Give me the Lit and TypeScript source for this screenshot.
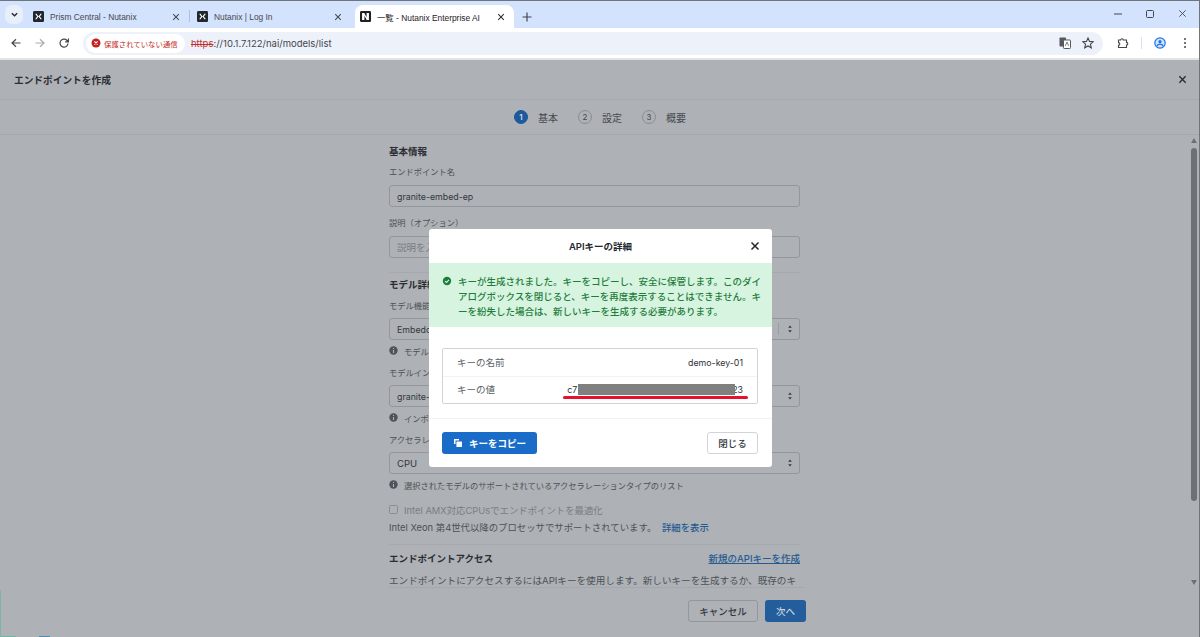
import { LitElement, html, css } from "lit";
import { customElement } from "lit/decorators.js";

const xIcon = (size: number, color: string, w = 1.6) => html`<svg width=${size} height=${size} viewBox="0 0 10 10"><path d="M1.5 1.5L8.5 8.5M8.5 1.5L1.5 8.5" stroke=${color} stroke-width=${w} fill="none"/></svg>`;
const nxLogo = html`<svg width="11" height="11" viewBox="0 0 16 16"><rect width="16" height="16" rx="2" fill="#22272e"/><path d="M4 4l3 4-3 4M12 4L9 8l3 4" stroke="#fff" stroke-width="1.8" fill="none"/></svg>`;
const nLogo = html`<svg width="11" height="11" viewBox="0 0 16 16"><rect width="16" height="16" rx="2" fill="#1c1f24"/><path d="M3 3h3.4v10H3zM9.6 3H13v10H9.6z" fill="#fff"/><path d="M5 3.5l6 9" stroke="#fff" stroke-width="2"/></svg>`;
const infoIcon = html`<svg class="info" width="9" height="9" viewBox="0 0 9 9"><circle cx="4.5" cy="4.5" r="4.2" fill="#4d545c"/><path d="M4.5 4V7M4.5 2V3.1" stroke="#aeb1b5" stroke-width="1.1"/></svg>`;
const selectArrows = html`<svg width="8" height="10" viewBox="0 0 8 10"><path d="M4 1.6L5.8 3.8H2.2zM4 8.4L5.8 6.2H2.2z" fill="#33383e"/></svg>`;

@customElement("app-root")
export class AppRoot extends LitElement {
  static styles = css`
    :host {
      display: block;
      width: 1200px;
      height: 637px;
      overflow: hidden;
      position: relative;
      font-family: "Inter", "Noto Sans CJK JP", sans-serif;
      background: #aeb1b5;
    }
    .tabstrip {
      height: 28px;
      background: #d3e3fd;
      display: flex;
      align-items: flex-end;
      padding-left: 5px;
      border-top: 1px solid #70757a;
      box-sizing: border-box;
      position: relative;
    }
    .tab-search {
      width: 18px;
      height: 19px;
      margin: 0 5px 4px 0;
      border-radius: 7px;
      background: #e8effb;
      display: flex;
      align-items: center;
      justify-content: center;
    }
    .tab {
      width: 161px;
      height: 23px;
      display: flex;
      align-items: center;
      padding: 0 9px 0 5px;
      gap: 6px;
      font-family: "Liberation Sans", "Noto Sans CJK JP", sans-serif;
      font-size: 8.4px;
      color: #45484d;
      flex: none;
      box-sizing: border-box;
    }
    .tab.second { padding-left: 7px; }
    .tab .label { flex: 1; white-space: nowrap; }
    .tab.active {
      width: 159px;
      margin-left: 4px;
      background: #fff;
      border-radius: 8px 8px 0 0;
      color: #1f2124;
    }
    .tab-sep { width: 1px; height: 12px; background: #a8c0e4; margin-bottom: 6px; }
    .plus { margin: 0 0 6px 8px; display: flex; align-items: center; }
    .win {
      position: absolute;
      right: 0;
      top: 8px;
      display: flex;
      gap: 24px;
      padding-right: 13px;
      align-items: center;
    }
    .toolbar {
      height: 30px;
      background: #fff;
      display: flex;
      align-items: center;
      padding-left: 10px;
    }
    .nav { display: flex; gap: 12px; align-items: center; margin-right: 13px; }
    .nav svg { display: block; }
    .omni {
      width: 1020px;
      height: 23px;
      border-radius: 12px;
      background: #ecf1fa;
      display: flex;
      align-items: center;
      padding-left: 3px;
      box-sizing: border-box;
      font-size: 9.5px;
      color: #44474c;
    }
    .chip {
      height: 19px;
      width: 99px;
      box-sizing: border-box;
      border-radius: 10px;
      background: #fff;
      display: flex;
      align-items: center;
      gap: 3px;
      padding-left: 5px;
      color: #c5302a;
      font-size: 7.4px;
      margin-right: 6px;
    }
    .https { color: #c5302a; text-decoration: line-through; }
    .spacer { flex: 1; }
    .omni-icons { display: flex; gap: 11px; align-items: center; padding-right: 9px; }
    .tool-right { display: flex; align-items: center; margin-left: 14px; }
    .sepv { width: 1px; height: 12px; background: #d6e2f5; margin: 0 12px; }
    .chrome-line { height: 2px; background: #e2e3e4; }

    .header {
      height: 40px;
      box-sizing: border-box;
      border-bottom: 1px solid #a5a8ac;
      display: flex;
      align-items: center;
      justify-content: space-between;
      padding: 0 13px 0 14px;
      font-size: 9.7px;
      font-weight: 600;
      color: #2a2e33;
    }
    .steps {
      height: 34px;
      display: flex;
      justify-content: center;
      align-items: center;
      font-size: 10px;
      color: #44494f;
    }
    .step { display: flex; align-items: center; gap: 10px; margin: 0 10px; }
    .num {
      width: 12px;
      height: 12px;
      border-radius: 50%;
      border: 1px solid #8a8e93;
      font-size: 8px;
      display: flex;
      align-items: center;
      justify-content: center;
    }
    .num.on { background: #1d5a9c; border-color: #1d5a9c; color: #d8dde3; font-weight: 600; }
    .scroll-line { border-top: 1px solid #a5a8ac; }
    .form {
      width: 411px;
      margin-left: 389px;
      font-size: 9.4px;
      color: #4c5157;
      height: 452px;
      overflow: hidden;
    }
    h3 {
      margin: 0;
      font-size: 9.5px;
      font-weight: 600;
      color: #2a2e33;
      line-height: 14px;
    }
    .lbl { font-size: 8.25px; line-height: 13px; height: 13px; white-space: nowrap; }
    .lbl.long { font-size: 9.6px; }
    .field {
      height: 22px;
      box-sizing: border-box;
      margin-top: 5px;
      border: 1px solid #93979c;
      border-radius: 3px;
      padding: 0 5px 0 7px;
      display: flex;
      align-items: center;
      justify-content: space-between;
      color: #33383e;
      font-size: 9.5px;
    }
    .field.latin { font-size: 8.8px; }
    .field.ph { color: #7a7e84; }
    .sel-right { display: flex; align-items: center; gap: 7px; }
    .sel-div { width: 1px; height: 12px; background: #9a9ea3; }
    .hint {
      display: flex;
      align-items: center;
      gap: 6px;
      height: 13px;
      margin-top: 4px;
      font-size: 8.25px;
      color: #4c5157;
      white-space: nowrap;
    }
    .info { display: block; flex: none; }
    .div { border-top: 1px solid #a5a8ac; }
    .check { display: flex; align-items: center; gap: 6px; margin-top: 12px; color: #7a7e84; height: 13px; }
    .box { width: 7px; height: 7px; border: 1px solid #8a8e93; border-radius: 1.5px; }
    .xeon { margin-top: 5px; line-height: 13px; white-space: nowrap; }
    a { color: #255b91; }
    .xeon a { font-weight: 500; margin-left: 3px; }
    .access { display: flex; justify-content: space-between; margin-top: 7px; }
    .access a { text-decoration: underline; font-size: 9.5px; font-weight: 500; line-height: 14px; }
    .footer {
      position: absolute;
      left: 0;
      right: 0;
      top: 587px;
      height: 50px;
      display: flex;
      justify-content: flex-end;
      align-items: center;
      gap: 7px;
      padding: 0 394px 2px 0;
      box-sizing: border-box;
    }
    .foot-line {
      position: absolute;
      top: 0;
      left: 389px;
      width: 416px;
      border-top: 1px solid #a5a8ac;
    }
    .btn {
      height: 22px;
      border-radius: 3px;
      display: flex;
      align-items: center;
      justify-content: center;
      font-size: 9.5px;
      font-weight: 500;
      box-sizing: border-box;
    }
    .btn.cancel { width: 70px; border: 1px solid #93979c; color: #33383e; }
    .btn.next { width: 41px; background: #245d9c; color: #cdd5de; }
    .scrollbar {
      position: absolute;
      left: 1191px;
      top: 148px;
      width: 6px;
      height: 353px;
      border-radius: 3px;
      background: #6d7074;
    }
    .scroll-arrow { position: absolute; left: 1191px; display: block; }
    .edge-right { position: absolute; right: 0; top: 0; width: 1px; height: 637px; background: #70757a; }
    .edge-left { position: absolute; left: 0; top: 590px; width: 1px; height: 47px; background: #7fb5a8; }

    .modal {
      position: absolute;
      left: 429px;
      top: 229px;
      width: 343px;
      height: 238px;
      background: #fff;
      border-radius: 3px;
      display: flex;
      flex-direction: column;
      color: #24282c;
    }
    .m-head {
      height: 34px;
      display: flex;
      align-items: center;
      justify-content: center;
      font-size: 9.5px;
      font-weight: 600;
      position: relative;
    }
    .m-close { position: absolute; right: 12px; top: 12px; display: block; }
    .alert {
      height: 64px;
      background: #d7f4e1;
      display: flex;
      padding: 11px 8px 0 13px;
      box-sizing: border-box;
      gap: 6px;
      color: #1f7d3a;
      font-size: 9.5px;
      line-height: 15px;
      font-weight: 500;
    }
    .alert svg { flex: none; margin-top: 2px; }
    .alert p { margin: 0; }
    .kv {
      margin: 21px 14px 0 13px;
      height: 56px;
      border: 1px solid #d0d4da;
      border-radius: 2px;
      box-sizing: border-box;
      font-size: 9.5px;
    }
    .row {
      height: 27px;
      box-sizing: border-box;
      display: flex;
      align-items: center;
      justify-content: space-between;
      padding: 0 14px 1px;
      color: #5a5f66;
      position: relative;
    }
    .row + .row { border-top: 1px solid #f1f2f4; padding-bottom: 2px; }
    .row .v { color: #2e3237; font-size: 8.8px; white-space: nowrap; }
    .key-gap { display: inline-block; width: 155px; }
    .mask {
      position: absolute;
      left: 135px;
      top: 7px;
      width: 157px;
      height: 11px;
      background: #808080;
    }
    .red {
      position: absolute;
      left: 120px;
      top: 19px;
      width: 185px;
      height: 3px;
      border-radius: 2px;
      background: #e8112d;
    }
    .m-foot {
      margin-top: 14px;
      border-top: 1px solid #f1f2f4;
      flex: 1;
      display: flex;
      align-items: center;
      justify-content: space-between;
      padding: 0 14px 0 13px;
    }
    .copy {
      width: 95px;
      background: #1a6cc9;
      color: #fff;
      gap: 6px;
      font-weight: 600;
    }
    .close { width: 51px; border: 1px solid #d0d4da; color: #33383e; }
    .bottom-strip { position: absolute; left: 0; top: 636px; height: 1px; width: 1200px; display: flex; }
    .bottom-strip i { display: block; height: 1px; }
  `;

  render() {
    return html`
      <div class="tabstrip">
        <div class="tab-search">
          <svg width="9" height="9" viewBox="0 0 10 10"><path d="M2 3.5L5 6.5 8 3.5" stroke="#2a2e33" stroke-width="1.6" fill="none"/></svg>
        </div>
        <div class="tab">${nxLogo}<span class="label">Prism Central - Nutanix</span>${xIcon(8, "#45484d", 1.3)}</div>
        <div class="tab-sep"></div>
        <div class="tab second">${nxLogo}<span class="label">Nutanix | Log In</span>${xIcon(8, "#45484d", 1.3)}</div>
        <div class="tab active">${nLogo}<span class="label">一覧 - Nutanix Enterprise AI</span>${xIcon(8, "#2a2e33", 1.3)}</div>
        <div class="plus">
          <svg width="10" height="10" viewBox="0 0 10 10"><path d="M5 .5v9M.5 5h9" stroke="#44474c" stroke-width="1.2"/></svg>
        </div>
        <div class="win">
          <svg width="8" height="8" viewBox="0 0 8 8"><path d="M0 4h8" stroke="#44474c" stroke-width="1"/></svg>
          <svg width="8" height="8" viewBox="0 0 8 8"><rect x=".5" y=".5" width="7" height="7" rx="1" stroke="#44474c" fill="none"/></svg>
          ${xIcon(9, "#44474c", 1)}
        </div>
      </div>
      <div class="toolbar">
        <div class="nav">
          <svg width="12" height="12" viewBox="0 0 12 12"><path d="M10.5 6H2M6 2.2L2 6l4 3.8" stroke="#44474c" stroke-width="1.2" fill="none"/></svg>
          <svg width="12" height="12" viewBox="0 0 12 12"><path d="M1.5 6H10M6 2.2L10 6 6 9.8" stroke="#a9abae" stroke-width="1.2" fill="none"/></svg>
          <svg width="12" height="12" viewBox="0 0 12 12"><path d="M10 6.5A4 4 0 1 1 8.8 3.2L10.2 4.6M10.4 1.6v3.2H7.2" stroke="#44474c" stroke-width="1.2" fill="none"/></svg>
        </div>
        <div class="omni">
          <div class="chip">
            <svg width="10" height="10" viewBox="0 0 10 10"><circle cx="5" cy="5" r="4.5" fill="#c5221f"/><path d="M3.4 3.4l3.2 3.2M6.6 3.4L3.4 6.6" stroke="#fff" stroke-width="1.1"/></svg>
            保護されていない通信
          </div>
          <span class="https">https</span><span>://10.1.7.122/nai/models/list</span>
          <div class="spacer"></div>
          <div class="omni-icons">
            <svg width="12" height="12" viewBox="0 0 12 12"><rect x=".5" y=".5" width="6.5" height="9" rx=".8" fill="#55585c"/><rect x="4.5" y="3" width="7" height="8.5" rx=".8" fill="#fff" stroke="#55585c"/><path d="M6.3 8.8L8 5l1.7 3.8" stroke="#55585c" stroke-width=".8" fill="none"/></svg>
            <svg width="12" height="12" viewBox="0 0 12 12"><path d="M6 1l1.5 3.4 3.7.4-2.8 2.4.9 3.6L6 8.9l-3.3 1.9.9-3.6L.8 4.8l3.7-.4z" stroke="#44474c" stroke-width="1.1" fill="none"/></svg>
          </div>
        </div>
        <div class="tool-right">
          <svg width="12" height="12" viewBox="0 0 12 12"><path d="M1.5 3h2.2a1.3 1.3 0 0 1 2.6 0h3.2v2.4a1.3 1.3 0 0 1 0 2.6v2.5H1.5V8.2a1.3 1.3 0 0 0 0-2.6z" stroke="#44474c" stroke-width="1.1" fill="none"/></svg>
          <div class="sepv"></div>
          <svg width="12" height="12" viewBox="0 0 12 12"><circle cx="6" cy="6" r="5.2" stroke="#1a73e8" stroke-width="1.2" fill="#d3e3fd"/><circle cx="6" cy="4.6" r="1.6" fill="#1a73e8"/><path d="M2.8 9a3.6 3.6 0 0 1 6.4 0" stroke="#1a73e8" stroke-width="1.2" fill="none"/></svg>
          <svg style="margin-left:17px" width="4" height="12" viewBox="0 0 4 12"><circle cx="2" cy="2" r="1" fill="#44474c"/><circle cx="2" cy="6" r="1" fill="#44474c"/><circle cx="2" cy="10" r="1" fill="#44474c"/></svg>
        </div>
      </div>
      <div class="chrome-line"></div>

      <div class="header">
        <span>エンドポイントを作成</span>
        ${xIcon(9, "#2a2e33", 1.5)}
      </div>
      <div class="steps">
        <div class="step"><span class="num on">1</span>基本</div>
        <div class="step"><span class="num">2</span>設定</div>
        <div class="step"><span class="num">3</span>概要</div>
      </div>
      <div class="scroll-line"></div>

      <div class="form">
        <h3 style="margin-top:10px">基本情報</h3>
        <div class="lbl" style="margin-top:7px">エンドポイント名</div>
        <div class="field latin" style="margin-top:6px">granite-embed-ep</div>
        <div class="lbl" style="margin-top:10px">説明（オプション）</div>
        <div class="field ph" style="margin-top:6px">説明を入力</div>
        <div class="div" style="margin:14px 0 5px"></div>
        <h3>モデル詳細</h3>
        <div class="lbl" style="margin-top:8px">モデル機能</div>
        <div class="field latin">
          Embedding
          <div class="sel-right">${xIcon(7, "#4c5157", 1.2)}<span class="sel-div"></span>${selectArrows}</div>
        </div>
        <div class="hint">${infoIcon}モデルの機能</div>
        <div class="lbl" style="margin-top:10px">モデルインスタンス</div>
        <div class="field latin">granite-em ${selectArrows}</div>
        <div class="hint">${infoIcon}インポートされた</div>
        <div class="lbl" style="margin-top:10px">アクセラレーション</div>
        <div class="field">CPU ${selectArrows}</div>
        <div class="hint">${infoIcon}選択されたモデルのサポートされているアクセラレーションタイプのリスト</div>
        <div class="check"><span class="box"></span>Intel AMX対応CPUsでエンドポイントを最適化</div>
        <div class="xeon">Intel Xeon 第4世代以降のプロセッサでサポートされています。 <a>詳細を表示</a></div>
        <div class="div" style="margin-top:10px"></div>
        <div class="access"><h3>エンドポイントアクセス</h3><a>新規のAPIキーを作成</a></div>
        <div class="lbl long" style="margin-top:8px">エンドポイントにアクセスするにはAPIキーを使用します。新しいキーを生成するか、既存のキ</div>
      </div>

      <div class="footer">
        <div class="foot-line"></div>
        <div class="btn cancel">キャンセル</div>
        <div class="btn next">次へ</div>
      </div>
      <svg class="scroll-arrow" style="top:138px" width="6" height="5" viewBox="0 0 6 5"><path d="M3 0l3 5H0z" fill="#6d7074"/></svg>
      <div class="scrollbar"></div>
      <svg class="scroll-arrow" style="top:580px" width="6" height="5" viewBox="0 0 6 5"><path d="M3 5L0 0h6z" fill="#6d7074"/></svg>
      <div class="edge-right"></div>
      <div class="edge-left"></div>

      <div class="modal">
        <div class="m-head">APIキーの詳細<svg class="m-close" width="10" height="10" viewBox="0 0 10 10"><path d="M1.5 1.5l7 7M8.5 1.5l-7 7" stroke="#24282c" stroke-width="1.5"/></svg></div>
        <div class="alert">
          <svg width="10" height="10" viewBox="0 0 10 10"><circle cx="5" cy="5" r="4.2" fill="#1f7d3a"/><path d="M3 5.1l1.5 1.4L7 3.8" stroke="#d7f4e1" stroke-width="1.2" fill="none"/></svg>
          <p>キーが生成されました。キーをコピーし、安全に保管します。このダイアログボックスを閉じると、キーを再度表示することはできません。キーを紛失した場合は、新しいキーを生成する必要があります。</p>
        </div>
        <div class="kv">
          <div class="row"><span>キーの名前</span><span class="v">demo-key-01</span></div>
          <div class="row"><span>キーの値</span><span class="v">c7<span class="key-gap"></span>23</span><div class="mask"></div><div class="red"></div></div>
        </div>
        <div class="m-foot">
          <div class="btn copy">
            <svg width="10" height="10" viewBox="0 0 10 10"><path d="M1 1h5v1.5H2.5V6H1z" fill="#fff"/><rect x="3.4" y="3.4" width="5.6" height="5.6" rx=".6" fill="#fff"/></svg>
            キーをコピー
          </div>
          <div class="btn close">閉じる</div>
        </div>
      </div>
      <div class="bottom-strip">
        <i style="width:16px;background:#72b4a6"></i><i style="width:23px"></i><i style="width:11px;background:#4b8fb0"></i>
      </div>
    `;
  }
}
